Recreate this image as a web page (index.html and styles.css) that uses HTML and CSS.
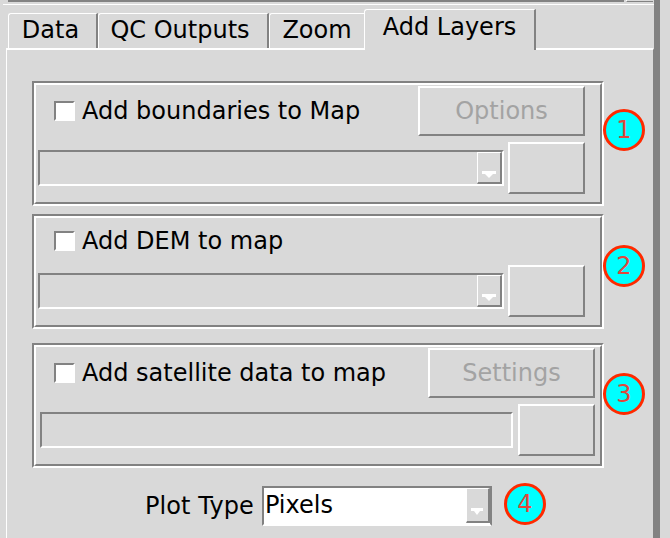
FILE: index.html
```html
<!DOCTYPE html>
<html>
<head>
<meta charset="utf-8">
<link rel="stylesheet" href="styles.css">
</head>
<body>
<div class="app">
  <div class="main">
    <div class="upper"><div class="upper-line"></div><div class="upper-box"></div></div>
    <div class="nb">
      <div class="tabs">
        <div class="tab t-data">Data</div>
        <div class="tab t-qc">QC Outputs</div>
        <div class="tab t-zoom">Zoom</div>
        <div class="tab active t-layers">Add Layers</div>
      </div>
      <div class="pane">
        <div class="grp-row">
          <div class="grp g1">
            <div class="grp-in">
              <div class="row1 r-btn">
                <label class="chk"><span class="box"></span><span class="lbl">Add boundaries to Map</span></label>
                <div class="btn wide disabled">Options</div>
              </div>
              <div class="row2">
                <div class="combo grow">
                  <div class="combo-arrow"><svg width="14" height="7" viewBox="0 0 14 7"><polygon points="0,0 14,0 14,3 11,3 7,7 3,3 0,3" fill="#fff"/></svg></div>
                </div>
                <div class="btn sq"></div>
              </div>
            </div>
          </div>
          <div class="badge b1">1</div>
        </div>

        <div class="grp-row r2">
          <div class="grp g2">
            <div class="grp-in">
              <div class="row1 r-nobtn">
                <label class="chk"><span class="box"></span><span class="lbl">Add DEM to map</span></label>
              </div>
              <div class="row2">
                <div class="combo grow">
                  <div class="combo-arrow"><svg width="14" height="7" viewBox="0 0 14 7"><polygon points="0,0 14,0 14,3 11,3 7,7 3,3 0,3" fill="#fff"/></svg></div>
                </div>
                <div class="btn sq"></div>
              </div>
            </div>
          </div>
          <div class="badge b2">2</div>
        </div>

        <div class="grp-row r3">
          <div class="grp g3">
            <div class="grp-in">
              <div class="row1 r-btn">
                <label class="chk"><span class="box"></span><span class="lbl">Add satellite data to map</span></label>
                <div class="btn wide disabled">Settings</div>
              </div>
              <div class="row2">
                <div class="entry grow"></div>
                <div class="btn sq"></div>
              </div>
            </div>
          </div>
          <div class="badge b3">3</div>
        </div>

        <div class="plot-row">
          <span class="plot-label">Plot Type</span>
          <div class="combo plot">
            <span class="combo-text">Pixels</span>
            <div class="combo-arrow pa"><svg width="12" height="7" viewBox="0 0 12 7"><polygon points="0,0 12,0 12,3 9,3 6,7 3,3 0,3" fill="#fff"/></svg></div>
          </div>
          <div class="badge b4">4</div>
        </div>
      </div>
    </div>
  </div>
  <div class="vbar"></div>
</div>
</body>
</html>
```
FILE: styles.css
```css
html, body {
  margin: 0;
  padding: 0;
}
body {
  background: #d9d9d9;
  font-family: "DejaVu Sans", sans-serif;
  font-size: 24px;
  color: #000;
  width: 670px;
  height: 538px;
  overflow: hidden;
}
.app {
  display: flex;
  height: 538px;
}
.main {
  width: 654px;
  display: flex;
  flex-direction: column;
}
.vbar {
  width: 6px;
  background: #828282;
}
.upper {
  height: 4px;
  display: flex;
}
.upper-line {
  margin-left: 8px;
  width: 616px;
  height: 2px;
  background: #828282;
}
.upper-box {
  margin-left: 2px;
  width: 27px;
  height: 2px;
  box-sizing: border-box;
  border-left: 1px solid #fff;
  border-bottom: 1px solid #828282;
}
.nb {
  margin-left: 3px;
  border-top: 1px solid #fff;
  flex: 1;
  display: flex;
  flex-direction: column;
}
.tabs {
  height: 43px;
  display: flex;
  align-items: flex-end;
  padding-left: 5px;
}
.tab {
  box-sizing: border-box;
  height: 35px;
  border-top: 1px solid #fff;
  border-left: 1px solid #fff;
  border-right: 2px solid #828282;
  border-top-left-radius: 3px;
  padding-top: 2px;
  line-height: 28px;
  text-align: center;
  white-space: nowrap;
  background: #d9d9d9;
}
.t-data { width: 90px; padding-right: 4px; }
.t-qc { width: 171px; padding-right: 6px; }
.t-zoom { width: 95px; border-right: none; }
.tab.active {
  width: 172px;
  height: 41px;
  margin-bottom: -2px;
  padding-top: 3px;
  position: relative;
  z-index: 1;
}
.pane {
  flex: 1;
  margin-left: 3px;
  border-left: 1px solid #fff;
  border-top: 2px solid #fff;
  border-right: 1px solid #828282;
  padding: 31px 0 0 25px;
}
.grp-row {
  display: flex;
  align-items: flex-start;
}
.r2 { margin-top: 8px; }
.r3 { margin-top: 14px; }
.grp {
  width: 572px;
  box-sizing: border-box;
  border: 2px solid;
  border-color: #828282 #fff #fff #828282;
}
.grp-in {
  border: 2px solid;
  border-color: #fff #828282 #828282 #fff;
  padding: 1px 15px 8px 2px;
}
.g3 .grp-in {
  padding: 1px 5px 8px 4px;
}
.row1 {
  display: flex;
  align-items: center;
  justify-content: space-between;
}
.r-btn { height: 50px; }
.r-nobtn { height: 44px; }
.row2 {
  display: flex;
  align-items: center;
  gap: 4px;
  margin-top: 6px;
}
.g2 .row2 { margin-top: 2px; }
.g3 .row2 { gap: 5px; }
.chk {
  display: flex;
  align-items: center;
  margin-left: 16px;
  line-height: 28px;
  white-space: nowrap;
}
.g3 .chk { margin-left: 14px; }
.box {
  width: 21px;
  height: 20px;
  box-sizing: border-box;
  background: #fff;
  border: 2px solid;
  border-color: #828282 #fff #fff #828282;
  margin-right: 7px;
}
.btn {
  box-sizing: border-box;
  border: 2px solid;
  border-color: #fff #828282 #828282 #fff;
  background: #d9d9d9;
}
.wide {
  width: 167px;
  height: 50px;
  display: flex;
  align-items: center;
  justify-content: center;
  line-height: 28px;
}
.disabled { color: #a3a3a3; }
.sq {
  width: 77px;
  height: 52px;
}
.grow { flex: 1; }
.combo {
  box-sizing: border-box;
  height: 36px;
  border: 2px solid;
  border-color: #828282 #fff #fff #828282;
  display: flex;
  justify-content: flex-end;
}
.combo-arrow {
  width: 25px;
  box-sizing: border-box;
  border-style: solid;
  border-width: 1px 2px 2px 1px;
  border-color: #fff #828282 #828282 #fff;
  display: flex;
  align-items: flex-end;
  justify-content: center;
  padding-bottom: 4px;
  background: #d9d9d9;
}
.combo-arrow svg { display: block; }
.entry {
  box-sizing: border-box;
  height: 36px;
  border: 2px solid;
  border-color: #828282 #fff #fff #828282;
}
.badge {
  width: 42px;
  height: 42px;
  box-sizing: border-box;
  border-radius: 50%;
  border: 3px solid #ff2a00;
  background: #00ffff;
  color: #e2473c;
  display: flex;
  align-items: center;
  justify-content: center;
  font-size: 24px;
  line-height: 1;
  margin-left: -1px;
}
.b1 { margin-top: 28px; }
.b2 { margin-top: 31px; }
.b3 { margin-top: 30px; }
.plot-row {
  display: flex;
  align-items: center;
  margin-top: 15px;
  padding-left: 113px;
}
.plot-label {
  line-height: 28px;
  margin-right: 8px;
  white-space: nowrap;
  letter-spacing: 0.1px;
}
.combo.plot {
  width: 230px;
  height: 40px;
  background: #fff;
  border-color: #828282 #828282 #fff #828282;
  justify-content: space-between;
  align-items: stretch;
}
.combo-text {
  line-height: 34px;
  padding-left: 1px;
}
.combo-arrow.pa {
  width: 24px;
  border-width: 1px 2px 2px 1px;
  padding-bottom: 6px;
  margin-bottom: 1px;
}
.b4 {
  margin-left: 12px;
  margin-bottom: 4px;
}
```
